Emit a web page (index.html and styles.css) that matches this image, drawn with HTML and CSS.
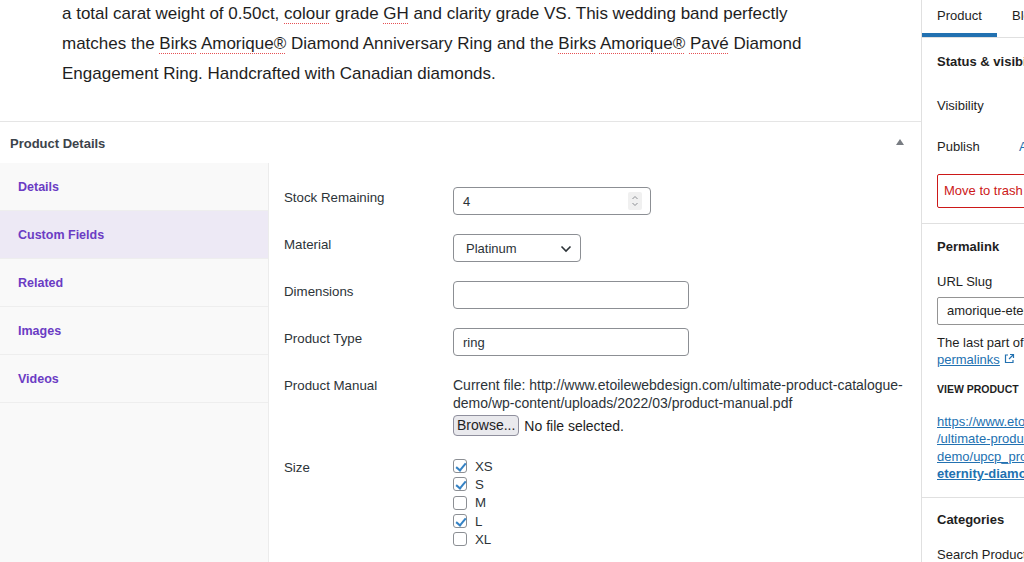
FILE: index.html
```html
<!DOCTYPE html>
<html>
<head>
<meta charset="utf-8">
<link rel="stylesheet" href="styles.css">
</head>
<body>
<div class="layout">
  <main class="main">
    <div class="editor">
      <p class="para">a total carat weight of 0.50ct, <span class="sp">colour</span> grade <span class="sp">GH</span> and clarity grade VS. This wedding band perfectly<br>matches the <span class="sp">Birks</span> <span class="sp">Amorique®</span> Diamond Anniversary Ring and the <span class="sp">Birks</span> <span class="sp">Amorique®</span> <span class="sp">Pavé</span> Diamond<br>Engagement Ring. Handcrafted with Canadian diamonds.</p>
    </div>
    <section class="postbox">
      <div class="postbox-head">
        <h2 class="postbox-title">Product Details</h2>
        <svg class="toggle" width="8" height="6" viewBox="0 0 8 6"><path d="M0 6 L4 0 L8 6 Z" fill="#787c82"/></svg>
      </div>
      <div class="tabs">
        <nav class="tab-nav">
          <div class="tab-item">Details</div>
          <div class="tab-item active">Custom Fields</div>
          <div class="tab-item">Related</div>
          <div class="tab-item">Images</div>
          <div class="tab-item">Videos</div>
        </nav>
        <div class="tab-content">
          <div class="field-row">
            <div class="field-label">Stock Remaining</div>
            <div class="field-value">
              <div class="box number-box"><span>4</span>
                <svg class="spin" width="14" height="18" viewBox="0 0 14 18"><rect width="14" height="18" rx="2" fill="#f0f0f0"/><path d="M4.5 7 L7 4.5 L9.5 7" fill="none" stroke="#8c8f94" stroke-width="1"/><path d="M4.5 11 L7 13.5 L9.5 11" fill="none" stroke="#8c8f94" stroke-width="1"/></svg>
              </div>
            </div>
          </div>
          <div class="field-row">
            <div class="field-label">Material</div>
            <div class="field-value">
              <div class="box select-box"><span>Platinum</span>
                <svg width="12" height="8" viewBox="0 0 12 8"><path d="M1.5 1.5 L6 6 L10.5 1.5" fill="none" stroke="#2c3338" stroke-width="1.6"/></svg>
              </div>
            </div>
          </div>
          <div class="field-row">
            <div class="field-label">Dimensions</div>
            <div class="field-value"><div class="box text-box"></div></div>
          </div>
          <div class="field-row">
            <div class="field-label">Product Type</div>
            <div class="field-value"><div class="box text-box">ring</div></div>
          </div>
          <div class="field-row file-row">
            <div class="field-label">Product Manual</div>
            <div class="field-value">
              <div class="current-file">Current file: http://www.etoilewebdesign.com/ultimate-product-catalogue-<br>demo/wp-content/uploads/2022/03/product-manual.pdf</div>
              <div class="file-input"><span class="browse">Browse...</span><span>No file selected.</span></div>
            </div>
          </div>
          <div class="field-row size-row">
            <div class="field-label">Size</div>
            <div class="field-value checks">
              <div class="check"><span class="cb on"></span>XS</div>
              <div class="check"><span class="cb on"></span>S</div>
              <div class="check"><span class="cb"></span>M</div>
              <div class="check"><span class="cb on"></span>L</div>
              <div class="check"><span class="cb"></span>XL</div>
            </div>
          </div>
        </div>
      </div>
    </section>
  </main>
  <aside class="sidebar">
    <div class="side-tabs">
      <div class="side-tab active">Product</div>
      <div class="side-tab">Block</div>
    </div>
    <div class="panel status">
      <div class="panel-title">Status &amp; visibility</div>
      <div class="row vis"><span class="row-label">Visibility</span></div>
      <div class="row pub"><span class="row-label">Publish</span><span class="row-val link">Anytime</span></div>
      <div class="trash">Move to trash</div>
    </div>
    <div class="panel permalink">
      <div class="panel-title">Permalink</div>
      <div class="slug-label">URL Slug</div>
      <div class="slug-input">amorique-eternity-diamond-band</div>
      <div class="help">The last part of the URL.<br><a class="plink">permalinks</a> <svg width="12" height="12" viewBox="0 0 12 12"><path d="M5 2 H2.5 V9.5 H10 V7" fill="none" stroke="#2271b1" stroke-width="1.2"/><path d="M7 1.5 H10.5 V5 M10.5 1.5 L6 6" fill="none" stroke="#2271b1" stroke-width="1.2"/></svg></div>
      <div class="view-label">VIEW PRODUCT</div>
      <div class="view-link"><a>https://www.etoilewebdesign.com<br>/ultimate-product-catalogue-<br>demo/upcp_product/amorique-<br><b>eternity-diamond-band</b></a></div>
    </div>
    <div class="panel cats">
      <div class="panel-title">Categories</div>
      <div class="search">Search Product Categories</div>
    </div>
  </aside>
</div>
</body>
</html>
```

FILE: styles.css
```css
* { box-sizing: border-box; }
html, body { margin: 0; padding: 0; background: #fff; }
body {
  font-family: "Liberation Sans", Arial, sans-serif;
  font-size: 13px;
  color: #1e1e1e;
  width: 1024px;
  height: 562px;
  overflow: hidden;
}
.layout { display: flex; height: 562px; }
.main { width: 921px; flex: none; display: flex; flex-direction: column; }
.editor { height: 121px; padding-left: 62px; overflow: hidden; }
.para {
  margin: -1px 0 0;
  font-family: "Liberation Sans", Arial, sans-serif;
  font-size: 17px;
  line-height: 30px;
  color: #1e1e1e;
  white-space: nowrap;
}
.sp {
  text-decoration: underline dotted #e65054;
  text-decoration-thickness: 1px;
  text-underline-offset: 4px;
}
.postbox { border-top: 1px solid #e5e5e5; flex: 1; display: flex; flex-direction: column; }
.postbox-head {
  height: 41px;
  display: flex;
  align-items: center;
  justify-content: space-between;
  padding: 1px 17px 0 10px;
}
.postbox-title { margin: 0; font-size: 13px; font-weight: bold; color: #3c434a; }
.toggle { margin-top: -2px; }
.tabs { flex: 1; display: flex; }
.tab-nav { width: 269px; flex: none; background: #f9f9f9; border-right: 1px solid #ececec; }
.tab-item {
  height: 48px;
  line-height: 46px;
  padding: 1px 0 0 18px;
  border-bottom: 1px solid #eeeeee;
  font-weight: bold;
  color: #6b3cc4;
  font-size: 12.5px;
}
.tab-item.active { background: #ede9f5; }
.tab-content { flex: 1; padding: 24px 0 0 15px; }
.field-row { display: grid; grid-template-columns: 169px 1fr; height: 47px; }
.field-label { line-height: 20px; padding-top: 1px; color: #2c3338; font-size: 13.3px; }
.box {
  border: 1px solid #8c8f94;
  border-radius: 4px;
  height: 28px;
  background: #fff;
  display: flex;
  align-items: center;
  padding: 0 9px;
  color: #2c3338;
  font-size: 13px;
}
.number-box { width: 198px; justify-content: space-between; padding-right: 8px; padding-top: 1px; }
.number-box .spin { margin-top: -1px; }
.select-box { width: 128px; justify-content: space-between; padding: 0 8px 0 12px; padding-top: 1px; }
.text-box { width: 236px; padding-top: 1px; }
.file-row { height: auto; margin-bottom: 21px; }
.current-file { line-height: 18px; color: #2c3338; margin-top: 1px; font-size: 14px; white-space: nowrap; }
.file-input { display: flex; align-items: center; margin-top: 3px; font-size: 14px; }
.browse {
  display: inline-block;
  height: 21px;
  line-height: 19px;
  padding: 0 3px;
  border: 1px solid #8f8f9d;
  border-radius: 4px;
  background: #e9e9ed;
  color: #1e1e1e;
  margin-right: 5px;
}
.size-row { height: auto; }
.checks { display: flex; flex-direction: column; padding-top: 0; }
.check { display: flex; align-items: center; height: 18.3px; color: #2c3338; font-size: 13.3px; }
.cb {
  width: 14px; height: 14px;
  border: 1px solid #8c8f94;
  border-radius: 3px;
  margin-right: 8px;
  position: relative;
  background: #fff;
}
.cb.on::after {
  content: "";
  position: absolute;
  left: 4px; top: 1px;
  width: 4px; height: 8px;
  border: solid #3582c4;
  border-width: 0 2px 2px 0;
  transform: rotate(40deg);
}
.sidebar {
  flex: 1;
  border-left: 1px solid #e0e0e0;
  overflow: hidden;
  min-width: 0;
}
.sidebar > * { width: 280px; }
.side-tabs { display: flex; height: 38px; border-bottom: 1px solid #e0e0e0; }
.side-tab { padding: 6px 15px 0; line-height: 20px; font-size: 13px; color: #1e1e1e; }
.side-tab.active { width: 75px; box-shadow: inset 0 -4px 0 #2271b1; }
.panel { padding: 13px 15px 15px; border-bottom: 1px solid #e0e0e0; }
.status { padding-top: 14px; }
.panel-title { line-height: 20px; font-weight: bold; color: #1e1e1e; font-size: 13px; }
.row { line-height: 20px; display: flex; }
.row-label { width: 82px; flex: none; }
.row-val.link { color: #2271b1; }
.vis { margin-top: 24px; }
.pub { margin-top: 21px; }
.trash {
  margin-top: 17px;
  height: 34px;
  line-height: 32px;
  border: 1px solid #cc1818;
  border-radius: 2px;
  color: #cc1818;
  padding-left: 6px;
}
.permalink { padding-bottom: 15px; }
.slug-label { margin-top: 15px; line-height: 20px; }
.slug-input {
  margin-top: 5px;
  height: 28px;
  border: 1px solid #949494;
  border-radius: 2px;
  padding: 0 9px;
  line-height: 26px;
}
.help { margin-top: 9px; line-height: 17px; color: #1e1e1e; }
.help svg { vertical-align: -1px; }
.plink, .view-link a { color: #2271b1; text-decoration: underline; }
.view-label { margin-top: 13px; font-size: 10.5px; line-height: 16px; font-weight: bold; color: #1e1e1e; }
.view-link { margin-top: 16px; line-height: 17.3px; }
.view-link b { font-weight: bold; }
.cats { border-bottom: none; padding-top: 12px; }
.search { margin-top: 15px; line-height: 20px; }
```
